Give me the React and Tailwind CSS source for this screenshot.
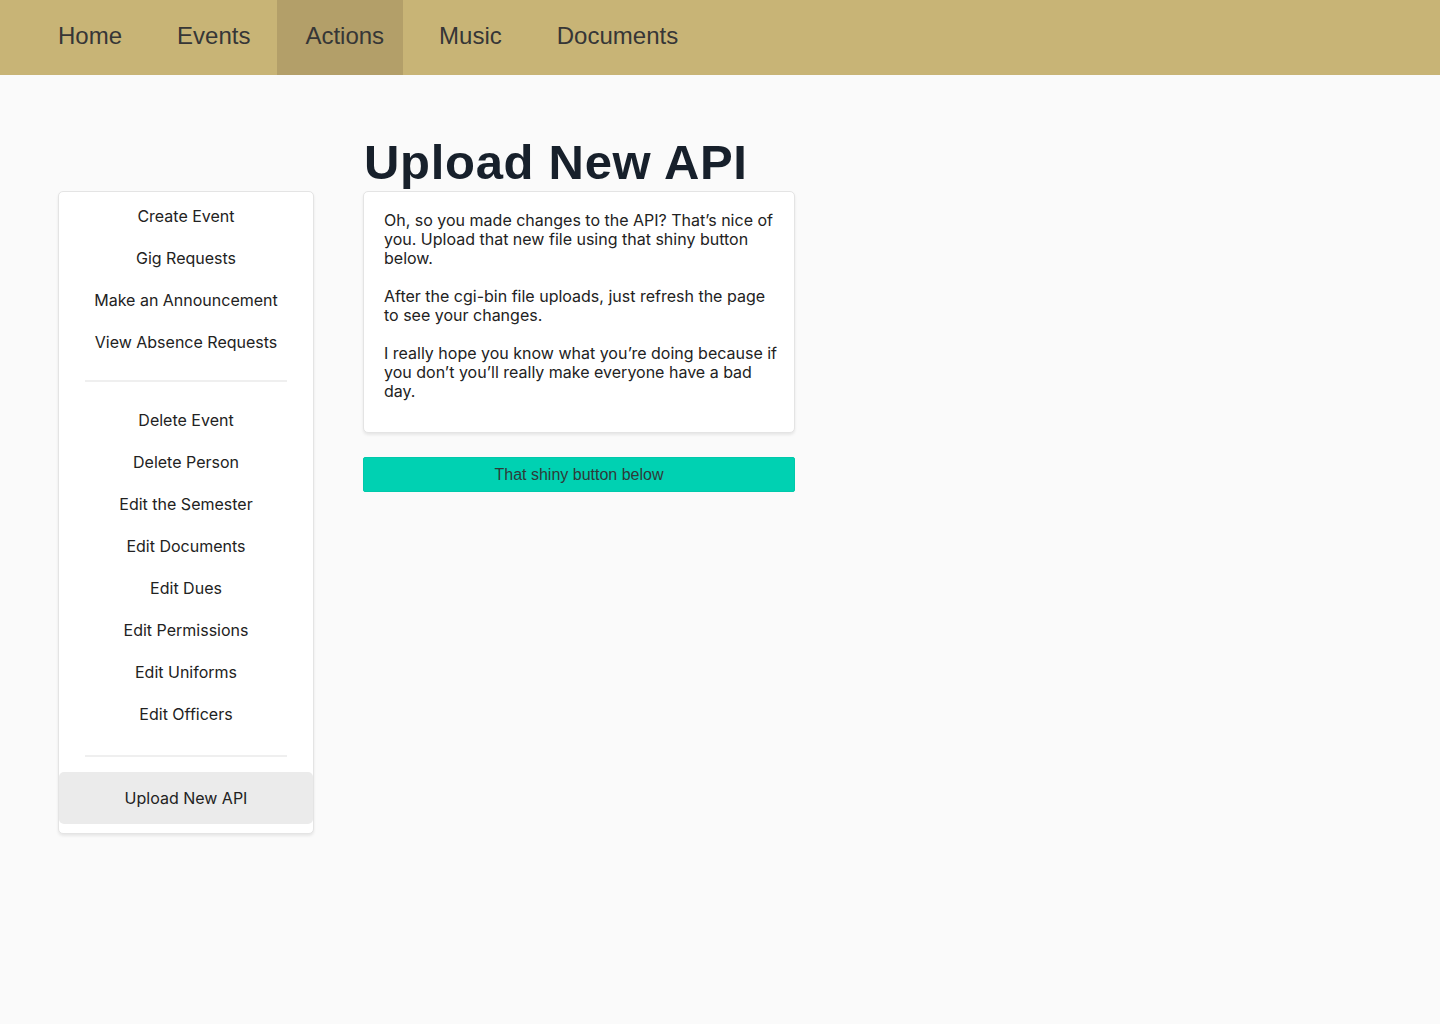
const NAV = ['Home', 'Events', 'Actions', 'Music', 'Documents']

const GROUPS = [
  ['Create Event', 'Gig Requests', 'Make an Announcement', 'View Absence Requests'],
  ['Delete Event', 'Delete Person', 'Edit the Semester', 'Edit Documents', 'Edit Dues', 'Edit Permissions', 'Edit Uniforms', 'Edit Officers'],
]

function SideItem({ label }) {
  return (
    <div className="h-[42px] flex items-center justify-center text-[16px] text-[#222]">
      {label}
    </div>
  )
}

export default function App() {
  return (
    <div className="min-h-screen bg-[#fafafa]" style={{ fontFamily: 'Inter, "Noto Sans", sans-serif' }}>
      {/* Top nav */}
      <nav className="h-[75px] bg-[#c8b476] flex items-stretch gap-[8px] pl-[30px]" style={{ fontFamily: '"Liberation Sans", Arial, sans-serif' }}>
        {NAV.map(item => (
          <a
            key={item}
            className={`flex items-center pl-[28px] pr-[19px] pb-[4px] text-[24px] text-[#363636] ${item === 'Actions' ? 'bg-[#b39f69]' : ''}`}
          >
            {item}
          </a>
        ))}
      </nav>

      <div className="flex pl-[58px] gap-[49px]">
        {/* Sidebar */}
        <div className="pt-[116px]">
          <div className="w-[256px] bg-white rounded-[5px] border border-[#e4e4e4] shadow-[0_2px_3px_rgba(10,10,10,0.08)] pt-[3px] pb-[9px]">
            {GROUPS[0].map(label => <SideItem key={label} label={label} />)}
            <div className="mx-[26px] mt-[17px] mb-[17px] h-[2px] bg-[#efefef]" />
            {GROUPS[1].map(label => <SideItem key={label} label={label} />)}
            <div className="mx-[26px] mt-[20px] mb-[15px] h-[2px] bg-[#efefef]" />
            <div className="h-[52px] flex items-center justify-center text-[16px] text-[#222] bg-[#ebebeb] rounded-[5px]">
              Upload New API
            </div>
          </div>
        </div>

        {/* Main */}
        <div className="w-[432px] pt-[63px]">
          <h1
            className="text-[49px] leading-none h-[48px] mb-[5px] font-bold tracking-[0.7px] text-[#17202b] pl-px"
            style={{ fontFamily: '"Liberation Sans", Arial, sans-serif' }}
          >
            Upload New API
          </h1>
          <div className="bg-white rounded-[5px] border border-[#e4e4e4] shadow-[0_2px_3px_rgba(10,10,10,0.08)] pl-[20px] pr-[10px] pt-[19px] pb-[31px] text-[16px] leading-[19px] text-[#222]">
            <p className="mb-[19px]">Oh, so you made changes to the API? That’s nice of you. Upload that new file using that shiny button below.</p>
            <p className="mb-[19px]">After the cgi-bin file uploads, just refresh the page to see your changes.</p>
            <p>I really hope you know what you’re doing because if you don’t you’ll really make everyone have a bad day.</p>
          </div>
          <button
            className="mt-[24px] w-full h-[35px] bg-[#00d1b2] rounded-[2px] border border-[#00c9ab] text-[16px] text-[#2f3a38]"
            style={{ fontFamily: '"Liberation Sans", Arial, sans-serif' }}
          >
            That shiny button below
          </button>
        </div>
      </div>
    </div>
  )
}
